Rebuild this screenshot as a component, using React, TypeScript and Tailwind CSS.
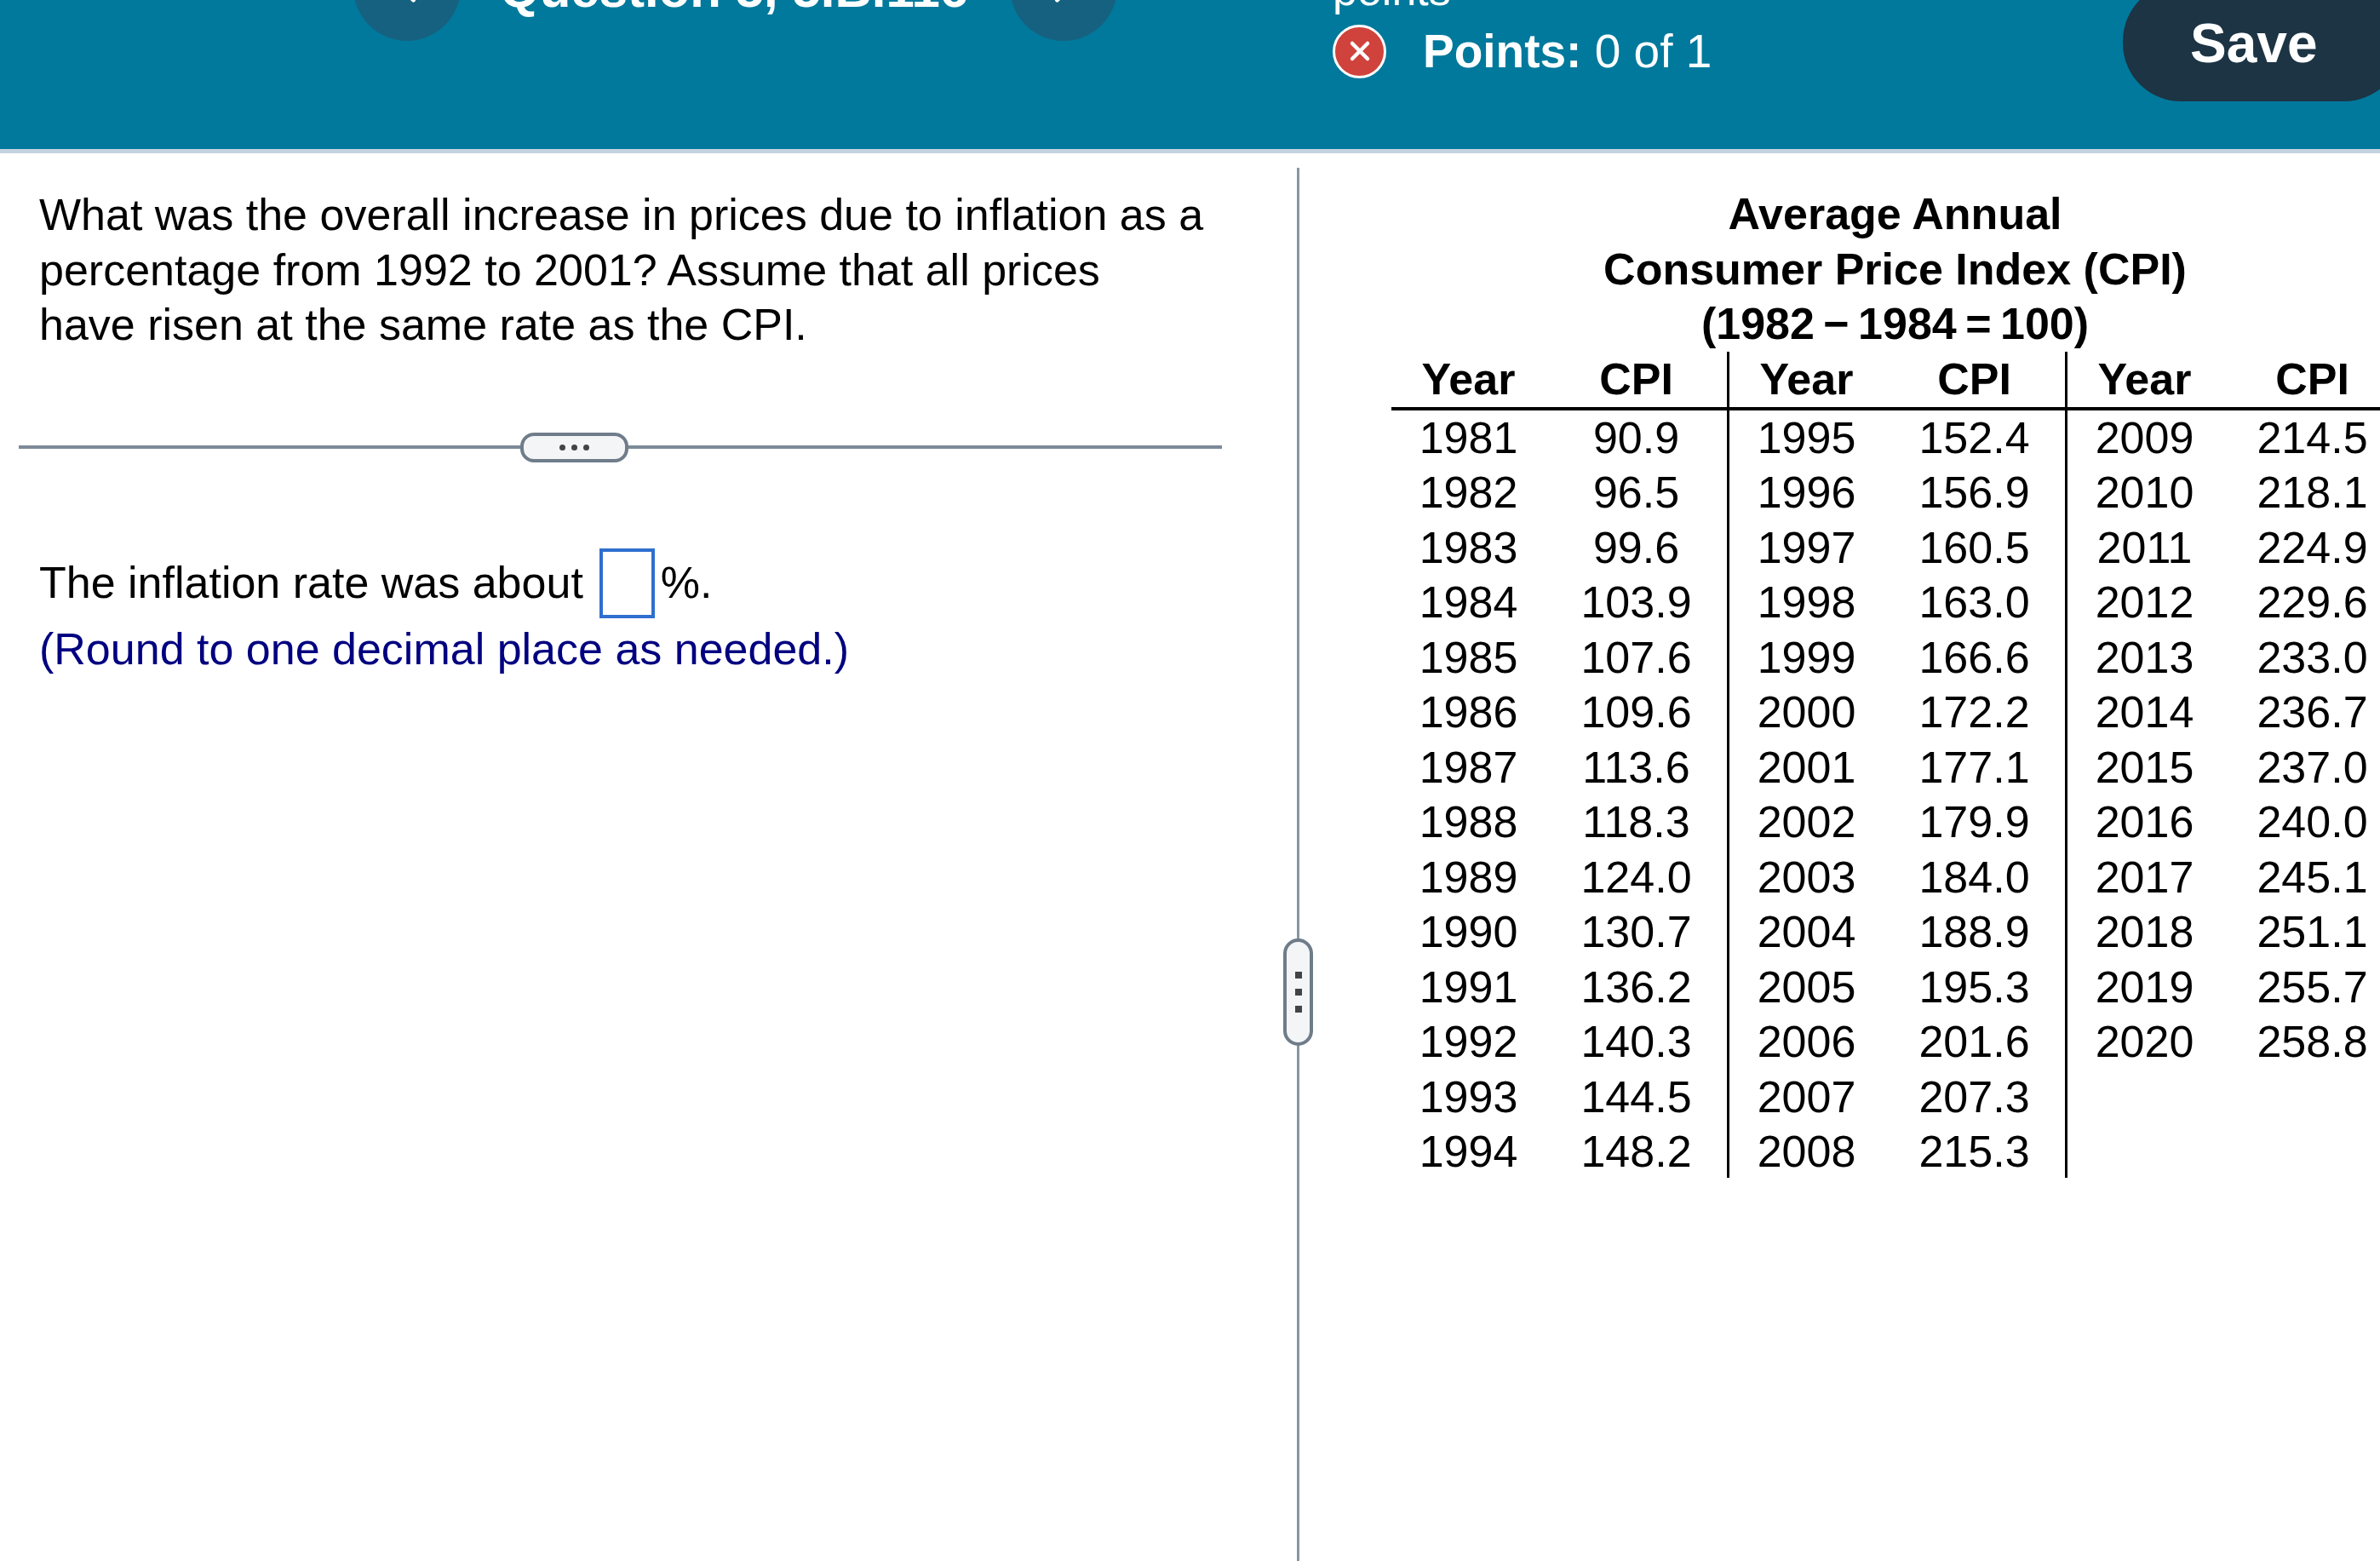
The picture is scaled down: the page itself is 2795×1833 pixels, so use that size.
import { ChevronLeft, ChevronRight, X } from "lucide-react";

const columns = [
  [
    ["1981", "90.9"],
    ["1982", "96.5"],
    ["1983", "99.6"],
    ["1984", "103.9"],
    ["1985", "107.6"],
    ["1986", "109.6"],
    ["1987", "113.6"],
    ["1988", "118.3"],
    ["1989", "124.0"],
    ["1990", "130.7"],
    ["1991", "136.2"],
    ["1992", "140.3"],
    ["1993", "144.5"],
    ["1994", "148.2"],
  ],
  [
    ["1995", "152.4"],
    ["1996", "156.9"],
    ["1997", "160.5"],
    ["1998", "163.0"],
    ["1999", "166.6"],
    ["2000", "172.2"],
    ["2001", "177.1"],
    ["2002", "179.9"],
    ["2003", "184.0"],
    ["2004", "188.9"],
    ["2005", "195.3"],
    ["2006", "201.6"],
    ["2007", "207.3"],
    ["2008", "215.3"],
  ],
  [
    ["2009", "214.5"],
    ["2010", "218.1"],
    ["2011", "224.9"],
    ["2012", "229.6"],
    ["2013", "233.0"],
    ["2014", "236.7"],
    ["2015", "237.0"],
    ["2016", "240.0"],
    ["2017", "245.1"],
    ["2018", "251.1"],
    ["2019", "255.7"],
    ["2020", "258.8"],
  ],
];

function CpiColumn({ rows, last }: { rows: string[][]; last?: boolean }) {
  return (
    <div
      className={
        last
          ? "flex h-[970px] w-[394px] shrink-0 flex-col"
          : "flex h-[970px] w-[397px] shrink-0 flex-col border-r-[3px] border-black"
      }
    >
      <div className="flex h-[69px] shrink-0 items-center border-b-4 border-black font-bold">
        <span className="w-[181px] text-center">Year</span>
        <span className="flex-1 text-center">CPI</span>
      </div>
      {rows.map(([year, cpi]) => (
        <div key={year} className="flex h-[64.5px] shrink-0 items-center">
          <span className="w-[181px] text-center">{year}</span>
          <span className="flex-1 text-center">{cpi}</span>
        </div>
      ))}
    </div>
  );
}

export default function App() {
  return (
    <div className="flex h-[1833px] w-[2795px] flex-col overflow-hidden bg-white font-['Liberation_Sans',Arial,sans-serif] text-[52px] leading-[64.5px] text-black">
      <header className="flex h-[180px] shrink-0 items-start overflow-hidden border-b-[5px] border-[#c5d3e0] bg-[#00799c] text-white">
        <div className="ml-[415px] mt-[-78px] flex h-[126px] w-[126px] shrink-0 items-center justify-center rounded-full bg-[#176180]">
          <ChevronLeft size={60} strokeWidth={2} />
        </div>
        <div className="ml-[46px] mt-[-44px] w-[600px] shrink-0 text-[60px] font-bold">
          Question 5, 5.B.116
        </div>
        <div className="ml-[-1px] mt-[-78px] flex h-[126px] w-[126px] shrink-0 items-center justify-center rounded-full bg-[#176180]">
          <ChevronRight size={60} strokeWidth={2} />
        </div>
        <div className="ml-[253px] mt-[-44px] flex w-[600px] shrink-0 flex-col">
          <span className="text-[52px] leading-[64px]">points</span>
          <div className="mt-[8px] flex items-center">
            <span className="flex h-[63px] w-[63px] items-center justify-center rounded-full border-[3px] border-white bg-[#d0423c]">
              <X size={36} strokeWidth={3} />
            </span>
            <span className="ml-[43px] text-[55px]">
              <b>Points:</b> 0 of 1
            </span>
          </div>
        </div>
        <div className="ml-[328px] mt-[-20px] flex h-[139px] w-[328px] shrink-0 items-end rounded-[68px] bg-[#1c3444] pb-[36px] pl-[79px] text-[64px] leading-[64px] font-bold">
          Save
        </div>
      </header>
      <main className="flex flex-1">
        <section className="w-[1523px] shrink-0 pt-[40px]">
          <p className="ml-[46px] w-[1370px]">
            What was the overall increase in prices due to inflation as a
            percentage from 1992 to 2001? Assume that all prices have risen at
            the same rate as the CPI.
          </p>
          <div className="ml-[22px] mt-[94px] flex h-[35px] w-[1413px] items-center">
            <div className="h-[4px] w-[589px] bg-[#7c8a99]" />
            <div className="flex h-[35px] w-[127px] items-center justify-center gap-[7px] rounded-[16px] border-[4px] border-[#6f7c8a] bg-[#f4f5f7]">
              <span className="h-[7px] w-[7px] rounded-full bg-[#444]" />
              <span className="h-[7px] w-[7px] rounded-full bg-[#444]" />
              <span className="h-[7px] w-[7px] rounded-full bg-[#444]" />
            </div>
            <div className="h-[4px] flex-1 bg-[#7c8a99]" />
          </div>
          <div className="ml-[46px] mt-[101px] flex h-[82px] items-center">
            <span>The inflation rate was about</span>
            <span className="ml-[19px] h-[82px] w-[65px] border-[4px] border-[#2f6fd0]" />
            <span className="ml-[7px]">%.</span>
          </div>
          <p className="ml-[46px] mt-[4px] text-[#000080]">
            (Round to one decimal place as needed.)
          </p>
        </section>
        <div className="mt-[17px] flex w-[3px] shrink-0 justify-center bg-[#8a96a5]">
          <div className="mt-[905px] flex h-[126px] w-[35px] shrink-0 flex-col items-center justify-center gap-[12px] rounded-[18px] border-[4px] border-[#6f7c8a] bg-[#f4f5f7]">
            <span className="h-[8px] w-[8px] bg-[#444]" />
            <span className="h-[8px] w-[8px] bg-[#444]" />
            <span className="h-[8px] w-[8px] bg-[#444]" />
          </div>
        </div>
        <section className="flex-1 overflow-hidden pl-[108px] pt-[39px]">
          <div className="w-[1183px] text-center font-bold">
            <div>Average Annual</div>
            <div>Consumer Price Index (CPI)</div>
            <div>(1982{"\u2009\u2212\u2009"}1984{"\u2009=\u2009"}100)</div>
          </div>
          <div className="flex w-[1188px]">
            <CpiColumn rows={columns[0]} />
            <CpiColumn rows={columns[1]} />
            <CpiColumn rows={columns[2]} last />
          </div>
        </section>
      </main>
    </div>
  );
}
